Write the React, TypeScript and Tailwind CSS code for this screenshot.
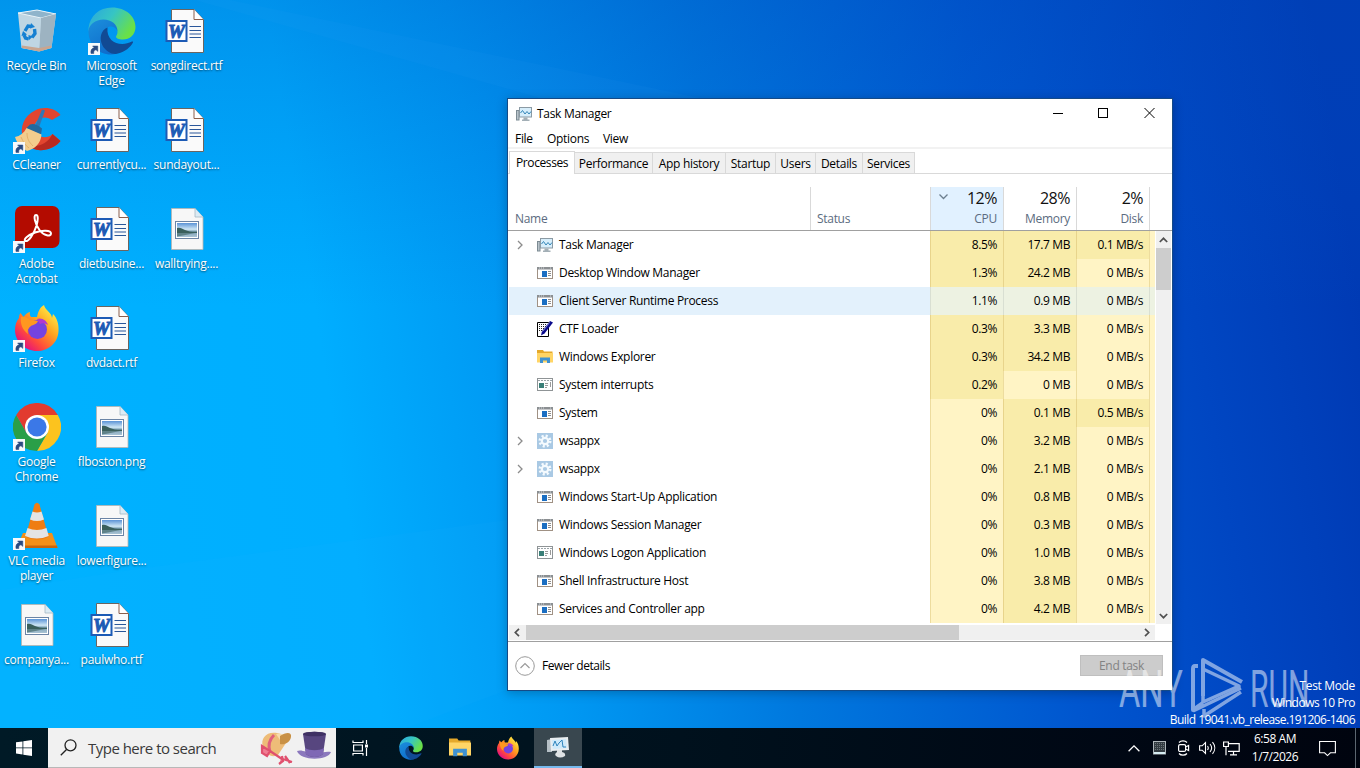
import { ReactNode } from "react";
import clsx from "clsx";

type IconProps = { className?: string };

const ShortcutArrow = () => (
  <svg viewBox="0 0 12 12" className="absolute bottom-0 left-0 w-3 h-3">
    <rect width="12" height="12" fill="#f7f9fb" />
    <path d="M3 10.500C2.400 7 4 5 6.200 4.800L4.600 3h5.200v5.400L8 6.800C6 7 5.600 8.600 5.800 10.500z" fill="#2b4a80" stroke="#2b4a80" strokeWidth="0.500" />
  </svg>
);

const RecycleBin = () => (
  <svg viewBox="0 0 48 48" className="w-12 h-12">
    <path d="M5 6 24 3l19 4-4.500 34L26 44.500 8.500 41z" fill="#c3d5e0" />
    <path d="M5 6 24 3l19 4-15 4z" fill="#8fb4cb" stroke="#e8f4fa" strokeWidth="1" />
    <path d="M28 11 43 7l-4.500 34L26 44.500z" fill="#9db3c1" />
    <path d="M6 8l22 3.500-2 32.500L9 41z" fill="#bfd6e3" />
    <path d="M9 38.500l17 2.500 12.500-2.500-.4 2.500L26 44.500 8.800 41z" fill="#c9a58f" />
    <g fill="none" stroke="#1580d2" strokeWidth="3.400">
      <path d="M12 24l3-5 3.500.5" />
      <path d="M21.500 22l.5 4.500-3 4" />
      <path d="M15.500 32l-3-1-1.500-3" />
    </g>
    <path d="M18 16l4 4-5 1.500zM20 29.500l-4.500 4V28zM8.500 29l1.500-5 4 3.500z" fill="#1580d2" />
  </svg>
);

const Edge = ({ className }: IconProps) => (
  <svg viewBox="0 0 48 48" className={className}>
    <defs>
      <linearGradient id="edgeTop" x1="0" y1="0" x2="1" y2="0.500">
        <stop offset="0" stopColor="#2aa5e0" />
        <stop offset="0.500" stopColor="#36c5c4" />
        <stop offset="1" stopColor="#6ae046" />
      </linearGradient>
      <linearGradient id="edgeLeft" x1="0" y1="0" x2="0.600" y2="1">
        <stop offset="0" stopColor="#1c8fdc" />
        <stop offset="1" stopColor="#0e6ccb" />
      </linearGradient>
    </defs>
    <path d="M0.500 21C2 9 11 0.500 24 0.500c14 0 23.500 9 23.500 19.500 0 8-6 12.500-12.500 12.500-4.500 0-7-1.200-7-2.700 0-1.200 1.500-2 1.500-5 0-5-5-9.500-12-9.500C9 15.300 3 19 .5 24z" fill="url(#edgeTop)" />
    <path d="M.5 24c0-6 7-11.500 15-11.500 8 0 14 5 14 11.500-2-4-5-5-7.500-4.500-5 1-8 7-5 14 3 8 11 11 17 9.500-3 3-7 4.500-11 4.500C10 47.500.5 37.500.5 24z" fill="url(#edgeLeft)" />
    <path d="M19.500 20.500c-7 3-8.500 11-5 18C18 45 25 48 30 46.600 37 45 42.500 40 45 35.500c.4-.8-.4-1.300-1.100-.9C33 40 18 36 19.500 20.500z" fill="#114a94" />
  </svg>
);

const Word = () => (
  <svg viewBox="0 0 48 48" className="w-12 h-12">
    <path d="M8.500 2.500h22.500l9.500 10V45.500h-32z" fill="#fafafa" stroke="#6b6560" strokeWidth="1" />
    <path d="M31 2.500v10h9.500" fill="#fff" stroke="#8a5f4c" strokeWidth="1" />
    <path d="M26.500 19.500H38M26.500 23.500H38M26.500 27H38M26.500 30.500H38" stroke="#2a579a" strokeWidth="1.100" />
    <rect x="3.500" y="14" width="20" height="20" fill="#fff" stroke="#1d5bb5" strokeWidth="2" />
    <text x="13.400" y="31" textAnchor="middle" letterSpacing="0" fontFamily="'Liberation Serif', serif" fontWeight="700" fontStyle="italic" fontSize="19" fill="#1d5bb5" stroke="#1d5bb5" strokeWidth="1">W</text>
  </svg>
);

const Picture = () => (
  <svg viewBox="0 0 48 48" className="w-12 h-12">
    <defs>
      <linearGradient id="photo" x1="0" y1="0" x2="0" y2="1">
        <stop offset="0" stopColor="#5b93d6" />
        <stop offset="0.450" stopColor="#cfe7f5" />
        <stop offset="0.600" stopColor="#7ba0b5" />
        <stop offset="1" stopColor="#a9c3d4" />
      </linearGradient>
    </defs>
    <path d="M8.500 3.500h23.500l8 8.500V44.500h-31.500z" fill="#f7f7f7" stroke="#b9b4ae" strokeWidth="0.800" />
    <path d="M32 3.500V12h8" fill="#dcebf4" stroke="#a5b8c4" strokeWidth="0.800" />
    <rect x="12.500" y="16.500" width="23" height="17" fill="#fff" stroke="#6b84a5" />
    <rect x="14" y="18" width="20" height="14" fill="url(#photo)" />
    <path d="M14 23c3-1 5 .5 8 2s8 2 12 1.800v1.200H14z" fill="#3a5f5c" />
    <path d="M14 28h18l-12 2.500-6 1z" fill="#5f8288" />
  </svg>
);

const CCleaner = () => (
  <svg viewBox="0 0 48 48" className="w-12 h-12">
    <path d="M47.500 9C42 2 31 0 22 4.500 11 10 7 21 9.500 30c3 11 12 15 21 14 7-1 13-4 17-9l-8-7c-4 4-11 4.500-15 .5-4-4-4-10 0-14 4-4 10-4 14.500-.5z" fill="#e2452f" />
    <path d="M47.500 35c-4 5-10 8-17 9-7 .8-12-1-16-5 10 3 20-1 25-11z" fill="#b82a20" />
    <path d="M29 3.500l3 1-6 17-4-1z" fill="#2f77b5" />
    <path d="M17 18.500q5-2 12 4l-1 6-15-6z" fill="#23699f" />
    <path d="M13.500 22l15 6.500C28 37 22 43 14 45 9 42 4 38 2 31c5-1 9-4 11.500-9z" fill="#f3cd8d" />
    <path d="M8 31c2 5 5 9 8 11M14 27c0 6 2 9 6 13" stroke="#e3b26c" fill="none" />
  </svg>
);

const Acrobat = () => (
  <svg viewBox="0 0 48 48" className="w-12 h-12">
    <rect x="2" y="1" width="44.500" height="42" rx="7" fill="#b30b00" />
    <path d="M23 10c-3 0-1 9 3.500 15S38 32 38 28.500s-9-3.500-16-1-11.500 7-10 8.300c3 2 9-7 11.500-15C25 15 25.500 10 23 10z" fill="none" stroke="#fff" strokeWidth="2" />
  </svg>
);

const Firefox = ({ className }: IconProps) => (
  <svg viewBox="0 0 48 48" className={className}>
    <defs>
      <linearGradient id="foxBody" x1="0.900" y1="0.100" x2="0.200" y2="0.900">
        <stop offset="0" stopColor="#fff04a" />
        <stop offset="0.400" stopColor="#ffa21e" />
        <stop offset="0.750" stopColor="#ff4a3c" />
        <stop offset="1" stopColor="#e5137c" />
      </linearGradient>
    </defs>
    <path d="M31 1c1 5 8 8 8 13l1-4c4 4 6 10 5.500 17C45 39 35.500 47 24 47S2 38 2 26c0-5 1.500-9 4-12 0-2 .5-4 1.500-5l3 4c2-3 4.500-4.500 6.500-5-.5 2 0 4 1 5h6c1-5 3-10 7-12z" fill="url(#foxBody)" />
    <circle cx="24.500" cy="25.500" r="9.500" fill="#7543e0" />
    <path d="M24 15c5-2 10 2 11 6-3-2-6-2-8-1z" fill="#b238cf" />
    <path d="M8 13c4-1 7 1 9 3l8 1c-1 3-5 4-7 5-3 2-4 5-3 8-5-4-8-9-7-17z" fill="#ff981f" />
  </svg>
);

const Chrome = () => (
  <svg viewBox="0 0 48 48" className="w-12 h-12">
    <path d="M24 24 3.200 12A24 24 0 0 1 44.800 12z" fill="#e23b2f" />
    <path d="M24 12h20.800A24 24 0 0 1 24 48l10.400-18z" fill="#fcc31e" />
    <path d="M13.600 30 3.200 12A24 24 0 0 0 24 48l10.400-18z" fill="#2a9f48" />
    <path d="M3.200 12l10.400 18L24 12z" fill="#e23b2f" />
    <circle cx="24" cy="24" r="12" fill="#fff" />
    <circle cx="24" cy="24" r="9.600" fill="#3b78e7" />
  </svg>
);

const Vlc = () => (
  <svg viewBox="0 0 48 48" className="w-12 h-12">
    <path d="M10 31h29l5.500 15h-41z" fill="#f39019" />
    <path d="M3.500 43.500h40.500l.5 2.500h-41z" fill="#c9660c" />
    <path d="M21.500 2.500q2.500-3.500 5 0L35.500 35q-11.500 5-23 0z" fill="#ef7d12" />
    <path d="M19.500 9.500q4.500 2 9 0l2.500 8q-7 3-14 0zM14.500 26q9.500 4 19 0l2.200 8q-12 5-23.700 0z" fill="#e4e4e4" />
  </svg>
);

const TaskMgrIcon = ({ className }: IconProps) => (
  <svg viewBox="0 0 16 16" className={className}>
    <rect x="0.500" y="4.500" width="2.500" height="9.500" fill="#b9c4cb" stroke="#7d8b93" />
    <rect x="3.500" y="1.500" width="12" height="9.500" fill="#d7eefb" stroke="#8b9aa4" />
    <path d="M4.500 7l2-2.500 2.500 3.500 2-2.500 2 2.500L15 5.500" fill="none" stroke="#3586b8" />
    <path d="M7.500 11.500h4v2h2v1.500H6v-1.500h1.500z" fill="#a3afb6" />
  </svg>
);

const AppIcon = () => (
  <svg viewBox="0 0 16 16" className="w-4 h-4">
    <rect x="0.500" y="2.500" width="15" height="11" fill="#fff" stroke="#a09184" />
    <path d="M0 2h16v2.500H0z" fill="#8b8f92" />
    <path d="M2 3h1M4 3h1M6 3h1M13 3h1" stroke="#d3d8dc" />
    <path d="M5 6h5v6H5z" fill="#1b6ec2" />
    <path d="M11 6.500h3M11 8.500h3M11 10.500h3" stroke="#8d8d8d" />
  </svg>
);

const ServiceAppIcon = () => (
  <svg viewBox="0 0 16 16" className="w-4 h-4">
    <rect x="0.500" y="1.500" width="15" height="12" fill="#fff" stroke="#8f9496" />
    <path d="M1 3.500h14" stroke="#9aa3a8" strokeDasharray="2 1" />
    <path d="M2 6h5v5H2z" fill="#3a7f78" />
    <path d="M8 6.500h3M8 8.500h3M8 10.500h2M13.500 5v5" stroke="#9a9a9a" />
  </svg>
);

const CtfIcon = () => (
  <svg viewBox="0 0 16 16" className="w-4 h-4">
    <path d="M.5 1.500h11v14H.5z" fill="#fff" stroke="#000" />
    <path d="M2 3.500h8M2 5.500h8M2 7.500h6M2 9.500h4" stroke="#222" strokeDasharray="1 1" />
    <path d="M13 0l3 1.500-8.500 11L4 14.500 5 10z" fill="#0b0b8c" />
    <path d="M12.500 1.500l-7 9" stroke="#8d93d8" />
  </svg>
);

const FolderIcon = ({ className }: IconProps) => (
  <svg viewBox="0 0 16 16" className={className}>
    <path d="M0 1h6l1 1.500h8.500V13H0z" fill="#e5a92b" />
    <path d="M0 4h16v9.500H0z" fill="#ffd566" />
    <path d="M3 8.500h10V14h-3v-2.500H6V14H3z" fill="#3f92d2" />
  </svg>
);

const GearIcon = () => (
  <svg viewBox="0 0 16 16" className="w-4 h-4">
    <rect width="16" height="16" fill="#a9c9e4" />
    <circle cx="8" cy="8" r="5" fill="none" stroke="#f4fafe" strokeWidth="3" strokeDasharray="2 1.930" />
    <circle cx="8" cy="8" r="3.200" fill="none" stroke="#f4fafe" strokeWidth="2.200" />
  </svg>
);

const desktopItems: { lines: string[]; icon: ReactNode; shortcut?: boolean }[] = [
  { lines: ["Recycle Bin"], icon: <RecycleBin /> },
  { lines: ["CCleaner"], icon: <CCleaner />, shortcut: true },
  { lines: ["Adobe", "Acrobat"], icon: <Acrobat />, shortcut: true },
  { lines: ["Firefox"], icon: <Firefox className="w-12 h-12" />, shortcut: true },
  { lines: ["Google", "Chrome"], icon: <Chrome />, shortcut: true },
  { lines: ["VLC media", "player"], icon: <Vlc />, shortcut: true },
  { lines: ["companya..."], icon: <Picture /> },
  { lines: ["Microsoft", "Edge"], icon: <Edge className="w-12 h-12" />, shortcut: true },
  { lines: ["currentlycu..."], icon: <Word /> },
  { lines: ["dietbusine..."], icon: <Word /> },
  { lines: ["dvdact.rtf"], icon: <Word /> },
  { lines: ["flboston.png"], icon: <Picture /> },
  { lines: ["lowerfigure..."], icon: <Picture /> },
  { lines: ["paulwho.rtf"], icon: <Word /> },
  { lines: ["songdirect.rtf"], icon: <Word /> },
  { lines: ["sundayout..."], icon: <Word /> },
  { lines: ["walltrying...."], icon: <Picture /> },
];

const tabs = [
  { name: "Performance", width: "w-[78px]" },
  { name: "App history", width: "w-[73px]" },
  { name: "Startup", width: "w-[50px]" },
  { name: "Users", width: "w-[40px]" },
  { name: "Details", width: "w-[47px]" },
  { name: "Services", width: "w-[52px]" },
];

type Row = {
  name: string;
  icon: ReactNode;
  cpu: string;
  mem: string;
  disk: string;
  expandable?: boolean;
  hover?: boolean;
};

const rows: Row[] = [
  { name: "Task Manager", icon: <TaskMgrIcon className="w-4 h-4" />, cpu: "8.5%", mem: "17.7 MB", disk: "0.1 MB/s", expandable: true },
  { name: "Desktop Window Manager", icon: <AppIcon />, cpu: "1.3%", mem: "24.2 MB", disk: "0 MB/s" },
  { name: "Client Server Runtime Process", icon: <AppIcon />, cpu: "1.1%", mem: "0.9 MB", disk: "0 MB/s", hover: true },
  { name: "CTF Loader", icon: <CtfIcon />, cpu: "0.3%", mem: "3.3 MB", disk: "0 MB/s" },
  { name: "Windows Explorer", icon: <FolderIcon className="w-4 h-4" />, cpu: "0.3%", mem: "34.2 MB", disk: "0 MB/s" },
  { name: "System interrupts", icon: <ServiceAppIcon />, cpu: "0.2%", mem: "0 MB", disk: "0 MB/s" },
  { name: "System", icon: <AppIcon />, cpu: "0%", mem: "0.1 MB", disk: "0.5 MB/s" },
  { name: "wsappx", icon: <GearIcon />, cpu: "0%", mem: "3.2 MB", disk: "0 MB/s", expandable: true },
  { name: "wsappx", icon: <GearIcon />, cpu: "0%", mem: "2.1 MB", disk: "0 MB/s", expandable: true },
  { name: "Windows Start-Up Application", icon: <AppIcon />, cpu: "0%", mem: "0.8 MB", disk: "0 MB/s" },
  { name: "Windows Session Manager", icon: <AppIcon />, cpu: "0%", mem: "0.3 MB", disk: "0 MB/s" },
  { name: "Windows Logon Application", icon: <ServiceAppIcon />, cpu: "0%", mem: "1.0 MB", disk: "0 MB/s" },
  { name: "Shell Infrastructure Host", icon: <AppIcon />, cpu: "0%", mem: "3.8 MB", disk: "0 MB/s" },
  { name: "Services and Controller app", icon: <AppIcon />, cpu: "0%", mem: "4.2 MB", disk: "0 MB/s" },
];

const Cell = ({ value, hover }: { value: string; hover?: boolean }) => (
  <div
    className={clsx(
      "w-[73px] h-7 shrink-0 border-l pr-[6px] flex items-center justify-end tracking-[-0.400px]",
      hover
        ? "bg-[#edf2e2] border-[#d9dfd2]"
        : value.startsWith("0 ") || value === "0%"
          ? "bg-[#fff4c5] border-[#eddc9e]"
          : "bg-[#f9ecaa] border-[#e8d48c]"
    )}
  >
    {value}
  </div>
);

const HeaderCell = ({ total, label, sorted }: { total: string; label: string; sorted?: boolean }) => (
  <div
    className={clsx(
      "relative w-[73px] h-[43px] shrink-0 border-l border-[#d9d9d9] pr-[6px] flex flex-col items-end",
      sorted && "bg-[#e1f1ff]"
    )}
  >
    {sorted && (
      <svg viewBox="0 0 9 6" className="absolute left-2 top-[7px] w-[9px] h-[6px]">
        <path d="M.5.5l4 4 4-4" fill="none" stroke="#6d7f8f" strokeWidth="1.300" />
      </svg>
    )}
    <div className="h-6 leading-[22px] text-[16px] tracking-[-0.500px] text-[#111]">{total}</div>
    <div className="h-4 leading-4 text-[#5b6b80]">{label}</div>
  </div>
);

const TaskManager = () => (
  <div className="absolute left-[507px] top-[98px] w-[666px] h-[593px] border border-[#154a86] bg-white text-black flex flex-col tracking-[-0.300px] shadow-[0_2px_10px_rgba(0,0,0,0.25)]">
    {/* title bar */}
    <div className="h-[30px] shrink-0 flex items-center pl-2">
      <TaskMgrIcon className="w-4 h-4" />
      <div className="ml-[5px] grow">Task Manager</div>
      <svg viewBox="0 0 104 12" className="w-[104px] h-3 mr-[16px] -mt-[2px]" fill="none" stroke="#000" shapeRendering="crispEdges">
        <path d="M1 6.500h10" />
        <rect x="46.500" y="1.500" width="9" height="9" />
        <path d="M92.500 1l10 10M102.500 1l-10 10" shapeRendering="auto" />
      </svg>
    </div>

    {/* menu */}
    <div className="h-5 shrink-0 flex items-center pt-[2px] pl-[7px] border-b-2 border-[#f2f2f2]">
      <div className="w-8">File</div>
      <div className="w-14">Options</div>
      <div>View</div>
    </div>

    {/* tabs */}
    <div className="h-[25px] shrink-0 flex items-end border-b border-[#d9d9d9] pl-px">
      <div className="w-[66px] h-[23px] -mb-px bg-white border-x border-t border-[#d9d9d9] pl-[6px] leading-[21px] tracking-[-0.400px]">
        Processes
      </div>
      {tabs.map((tab) => (
        <div
          key={tab.name}
          className={clsx("h-[21px] bg-[#f0f0f0] border-t border-r border-[#d9d9d9] text-center leading-[22px] whitespace-nowrap", tab.width)}
        >
          {tab.name}
        </div>
      ))}
    </div>

    {/* column headers */}
    <div className="h-[57px] shrink-0 flex items-end border-b border-[#a0a0a0]">
      <div className="w-[302px] h-[43px] pl-[7px] pt-6 leading-4 text-[#5b6b80]">Name</div>
      <div className="w-[120px] h-[43px] pl-[6px] pt-6 leading-4 text-[#5b6b80] border-l border-[#d9d9d9]">Status</div>
      <HeaderCell total="12%" label="CPU" sorted />
      <HeaderCell total="28%" label="Memory" />
      <HeaderCell total="2%" label="Disk" />
      <div className="w-px h-[43px] bg-[#d9d9d9]" />
    </div>

    {/* process list */}
    <div className="flex h-[393px] shrink-0">
      <div className="w-[647px]">
        {rows.map((row, i) => (
          <div key={i} className="h-7 flex items-center">
            <div className={clsx("grow h-7 ml-px flex items-center", row.hover && "bg-[#e3f1fc]")}>
              <div className="w-7 pl-2">
                {row.expandable && (
                  <svg viewBox="0 0 6 10" className="w-[6px] h-[10px]">
                    <path d="M1 1l4 4-4 4" fill="none" stroke="#8c8c8c" strokeWidth="1.300" />
                  </svg>
                )}
              </div>
              <div className="w-[22px]">{row.icon}</div>
              <div className="whitespace-nowrap">{row.name}</div>
            </div>
            <Cell value={row.cpu} hover={row.hover} />
            <Cell value={row.mem} hover={row.hover} />
            <Cell value={row.disk} hover={row.hover} />
            <div className={clsx("w-[6px] h-7 border-l", row.hover ? "bg-[#edf2e2] border-[#d9dfd2]" : "bg-[#fff4c5] border-[#eddc9e]")} />
          </div>
        ))}
      </div>
      <div className="w-[15px] ml-px bg-[#f0f0f0] flex flex-col items-center">
        <svg viewBox="0 0 9 6" className="w-[9px] h-[6px] mt-[6px]">
          <path d="M.8 5l3.700-3.700L8.200 5" fill="none" stroke="#505050" strokeWidth="1.700" />
        </svg>
        <div className="w-full h-[42px] mt-[5px] bg-[#cdcdcd]" />
        <svg viewBox="0 0 9 6" className="w-[9px] h-[6px] mt-auto mb-[5px]">
          <path d="M.8 1l3.700 3.700L8.200 1" fill="none" stroke="#505050" strokeWidth="1.700" />
        </svg>
      </div>
    </div>

    {/* horizontal scrollbar */}
    <div className="h-[18px] shrink-0 border-b border-[#a0a0a0] pt-px pb-px pl-px">
      <div className="w-[646px] h-[15px] bg-[#f0f0f0] flex items-center">
        <svg viewBox="0 0 6 9" className="w-[6px] h-[9px] ml-[5px] mr-[6px]">
          <path d="M5 .8L1.300 4.500 5 8.200" fill="none" stroke="#505050" strokeWidth="1.700" />
        </svg>
        <div className="w-[433px] h-full bg-[#cdcdcd]" />
        <svg viewBox="0 0 6 9" className="w-[6px] h-[9px] ml-auto mr-[5px]">
          <path d="M1 .8l3.700 3.700L1 8.200" fill="none" stroke="#505050" strokeWidth="1.700" />
        </svg>
      </div>
    </div>

    {/* footer */}
    <div className="grow flex items-center pl-[7px] pr-[9px]">
      <svg viewBox="0 0 20 20" className="w-5 h-5 mr-[7px]" fill="none">
        <circle cx="10" cy="10" r="9.300" stroke="#9a9a9a" />
        <path d="M5.500 12l4.500-4.500 4.500 4.500" stroke="#9a9a9a" strokeWidth="1.200" />
      </svg>
      <div className="grow tracking-[-0.450px]">Fewer details</div>
      <div className="w-[83px] h-[21px] -mt-px bg-[#cccccc] border border-[#bfbfbf] text-[#838383] text-center leading-[19px]">
        End task
      </div>
    </div>
  </div>
);

const Watermark = () => (
  <div className="absolute left-[1119px] top-[656px] w-[192px] h-[64px] opacity-50 text-white tracking-normal">
    <div className="absolute left-0 top-[4px] text-[51px] leading-[60px] origin-left scale-x-[0.640] font-normal font-[Roboto,sans-serif]">ANY</div>
    <svg viewBox="0 0 56 64" className="absolute left-[70px] top-0 w-14 h-16" fill="none" stroke="#fff" strokeLinejoin="round">
      <path d="M9 10H6q-2 0-2 3v41L14 47" strokeWidth="4" />
      <path d="M14 40V4l39 22" strokeWidth="4" />
      <path d="M14 14v32l36-16L14 13" strokeWidth="3.500" />
      <path d="M4 55l48-23M15 53v7l37-24" strokeWidth="3.500" />
    </svg>
    <div className="absolute left-[131px] top-[4px] text-[51px] leading-[60px] origin-left scale-x-[0.590] font-normal font-[Roboto,sans-serif]">RUN</div>
  </div>
);

const Hats = () => (
  <svg viewBox="0 0 72 36" className="w-[72px] h-9">
    <path d="M3 17C0 8 7 1 17 3c6 1 10 5 9 10l-8 12c-6 3-12 0-15-8z" fill="#eebc78" />
    <path d="M16 4c6-2 11 2 12 8l-6 1z" fill="#f8dcaa" />
    <path d="M20 6c6-4 12-4 11 1-1 6-7 8-11 7z" fill="#c99145" />
    <path d="M14 5C9 10 8 16 10 22" stroke="#e0607c" strokeWidth="3" fill="none" />
    <path d="M2 16l8 5-3 5-5-3zM10 21l12 8M22 26l1 5-4 3M23 29l9 3M25 26l5 7" stroke="#e0506e" strokeWidth="2.200" fill="#ef7d92" />
    <path d="M37 21c3 10 31 10 34 1-5-1-9 1-17 1s-12-4-17-2z" fill="#8b78bd" />
    <path d="M43 4c6-3 17-3 23 0l-3 20c-4 4-13 4-17 0z" fill="#57467f" />
    <path d="M45 18c5 3 14 3 19 0l-1 6c-4 4-13 4-17 0z" fill="#7f68b5" />
    <ellipse cx="54.500" cy="4" rx="11.500" ry="2.300" fill="#3f3163" />
  </svg>
);

const Taskbar = () => (
  <div className="absolute left-0 bottom-0 w-full h-10 bg-linear-to-r from-[#001a26] via-[#00111d] to-[#00040f] flex items-center text-white">
    <div className="w-12 flex justify-center">
      <svg viewBox="0 0 16 16" className="w-4 h-4" fill="#fff">
        <path d="M0 2.300l6.500-.9v6.100H0zM7.300 1.300L16 0v7.500H7.300zM0 8.300h6.500v6.200L0 13.600zM7.300 8.300H16V16l-8.700-1.300z" />
      </svg>
    </div>
    <div className="w-72 h-10 bg-[#f1f1f1] border-b border-[#b8b8b8] flex items-center pl-3 pr-1 text-[#3a3a3a]">
      <svg viewBox="0 0 17 17" className="w-[17px] h-[17px]" fill="none" stroke="#222" strokeWidth="1.300">
        <circle cx="10.500" cy="6.300" r="5.500" />
        <path d="M6.500 10.500L.8 16.300" />
      </svg>
      <div className="ml-[11px] mt-[2px] grow text-[15px] tracking-[-0.520px] whitespace-nowrap">Type here to search</div>
      <Hats />
    </div>
    <div className="w-12 flex justify-center">
      <svg viewBox="0 0 17 16" className="w-[17px] h-4" fill="none" stroke="#fff" strokeWidth="1.200">
        <path d="M1 .5v2h10v-2M1 15.500v-2h10v2M1.600 5h8.800v6H1.600zM14.500 0v4M14.500 8v8" />
        <path d="M13 4.500h3v3h-3z" fill="#fff" stroke="none" />
      </svg>
    </div>
    <div className="w-[54px] flex justify-center">
      <Edge className="w-6 h-6" />
    </div>
    <div className="w-[44px] flex justify-center">
      <FolderIcon className="w-[22px] h-[22px]" />
    </div>
    <div className="w-[52px] flex justify-center">
      <Firefox className="w-6 h-6" />
    </div>
    <div className="w-12 h-10 bg-[#39474f] border-b-2 border-[#76b9ed] flex items-center justify-center">
      <svg viewBox="0 0 24 22" className="w-6 h-[22px]">
        <path d="M1 4l5-1v13H1z" fill="#b5bfc5" />
        <path d="M4 2l18-1 1 13-18 1z" fill="#e9eef1" />
        <path d="M6 4l14-1 1 9-14 1z" fill="#cfeafa" />
        <path d="M7 10l2-5 2 5 2-3 3-3 1 7h3" fill="none" stroke="#2f84bd" />
        <path d="M11 14h5v2q4 1 3 4-5 3-9 0-2-2 1-4z" fill="#dfe2e4" />
      </svg>
    </div>

    {/* tray */}
    <div className="ml-auto flex items-center">
      <svg viewBox="0 0 12 7" className="w-3 h-[7px] mr-[13px]" fill="none" stroke="#fff" strokeWidth="1.300">
        <path d="M.6 6.300L6 .9l5.400 5.400" />
      </svg>
      <svg viewBox="0 0 13 14" className="w-[13px] h-[14px] mr-[11px]">
        <rect x="0.500" y="0.500" width="12" height="12.500" fill="#333c42" stroke="#aeb6ba" />
        <path d="M2 2.500h9M2 4.500h9M2 6.500h9M2 8.500h9" stroke="#6d767b" strokeDasharray="1 1" />
        <path d="M1 12h11" stroke="#d5ecf2" strokeWidth="2" />
      </svg>
      <svg viewBox="0 0 13 16" className="w-[13px] h-4 mr-[9px]" fill="none" stroke="#fff" strokeWidth="1.200">
        <rect x="1.600" y="4.600" width="7" height="6.800" rx="1.500" />
        <path d="M8.600 7l3-1.500v5l-3-1.500M2 2.500C4 .3 8 .3 10 2.500M2 13.500c2 2.200 6 2.200 8 0" />
      </svg>
      <svg viewBox="0 0 17 14" className="w-[17px] h-[14px] mr-[7px]" fill="none" stroke="#fff" strokeWidth="1.100">
        <path d="M.6 4.800h2.600L6.500 1.500v11L3.200 9.200H.6zM8.500 5c.9 1.200.9 2.800 0 4M11 3c1.900 2.300 1.900 5.700 0 8M13.500 1.200c3 3.500 3 8.100 0 11.600" />
      </svg>
      <svg viewBox="0 0 17 15" className="w-[17px] h-[15px] mr-[11px]" fill="none" stroke="#fff" strokeWidth="1.200">
        <path d="M6 2.600h10.200v7.800H5M10.500 10.500v3M7 13.800h7M.6 1h4.800v4.500H.6zM3 5.500v8.800" />
      </svg>
      <div className="w-[48px] text-center leading-[18px] tracking-[-0.450px] whitespace-nowrap">
        <div className="-mx-2">6:58 AM</div>
        <div className="-mx-2">1/7/2026</div>
      </div>
      <svg viewBox="0 0 17 17" className="w-[17px] h-[17px] ml-[20px] mr-[19px]" fill="none" stroke="#fff" strokeWidth="1.100">
        <path d="M.6 1.500h15.800v11.300h-5L8.500 15.600l-2.900-2.800h-5z" />
      </svg>
      <div className="w-px h-10 bg-[#5c6670] mr-1" />
    </div>
  </div>
);

const Wallpaper = () => (
  <svg viewBox="0 0 1360 768" preserveAspectRatio="none" className="absolute inset-0 w-full h-full">
    <defs>
      <linearGradient id="sky" x1="0" y1="520" x2="1360" y2="300" gradientUnits="userSpaceOnUse">
        <stop offset="0" stopColor="#00b2ff" />
        <stop offset="0.250" stopColor="#00aeff" />
        <stop offset="0.380" stopColor="#0099f3" />
        <stop offset="0.550" stopColor="#0078de" />
        <stop offset="0.750" stopColor="#0056cf" />
        <stop offset="0.880" stopColor="#0046c2" />
        <stop offset="1" stopColor="#003ab4" />
      </linearGradient>
      <linearGradient id="skyTop" x1="0" y1="0" x2="0" y2="1">
        <stop offset="0" stopColor="#004cbc" stopOpacity="0.280" />
        <stop offset="0.400" stopColor="#0060d0" stopOpacity="0" />
      </linearGradient>
    </defs>
    <rect width="1360" height="768" fill="url(#sky)" />
    <rect width="1360" height="768" fill="url(#skyTop)" />
    <path d="M195 0L540 98H700L230 0z" fill="#46b6ff" opacity="0.050" />
    <path d="M130 570L507 520V690L300 768H0V590z" fill="#20b4ff" opacity="0.080" />
  </svg>
);

const App = () => (
  <div className="relative w-[1360px] h-[768px] overflow-hidden bg-[#0078d7] text-[12px] tracking-[-0.250px] font-['Open_Sans','Noto_Sans',sans-serif]">
    <Wallpaper />

    <div className="absolute -left-px top-0 grid grid-flow-col grid-rows-[repeat(7,99px)] auto-cols-[75px]">
      {desktopItems.map((item) => (
        <div key={item.lines[0]} className="flex flex-col items-center pt-[7px]">
          <div className="relative w-12 h-12">
            {item.icon}
            {item.shortcut && <ShortcutArrow />}
          </div>
          <div className="mt-[3px] text-center leading-[15px] text-white whitespace-nowrap [text-shadow:0_1px_2px_rgba(0,0,0,0.550)]">
            {item.lines.map((line) => (
              <div key={line}>{line}</div>
            ))}
          </div>
        </div>
      ))}
    </div>

    <TaskManager />
    <Watermark />

    <div className="absolute right-[5px] bottom-[40px] text-right text-white leading-[17px] tracking-[-0.350px]">
      <div>Test Mode</div>
      <div className="tracking-[-0.500px]">Windows 10 Pro</div>
      <div className="tracking-[-0.550px]">Build 19041.vb_release.191206-1406</div>
    </div>

    <Taskbar />
  </div>
);

export default App;
